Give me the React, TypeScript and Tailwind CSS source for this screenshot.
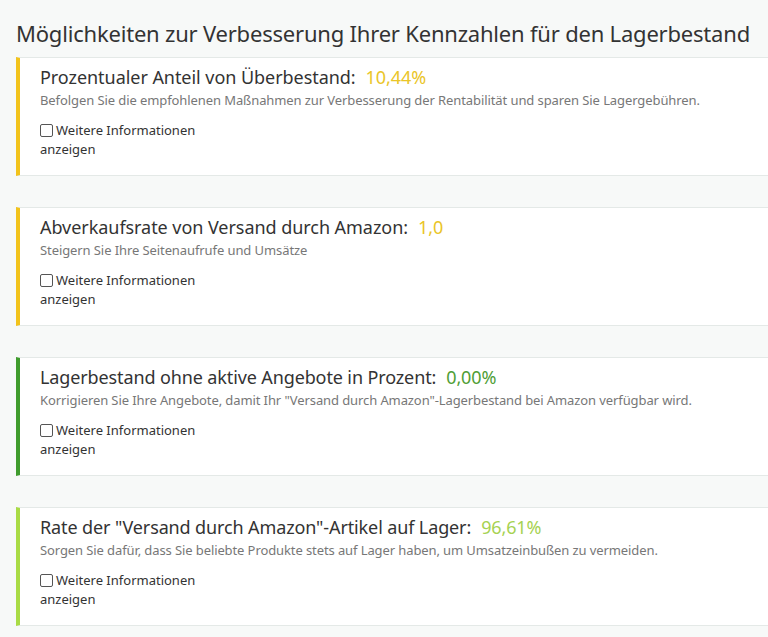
import { useState } from 'react'

type Metric = {
  title: string
  value: string
  hint: string
  bar: string
  tone: string
  wide?: boolean
}

const metrics: Metric[] = [
  {
    title: 'Prozentualer Anteil von Überbestand:',
    value: '10,44%',
    hint: 'Befolgen Sie die empfohlenen Maßnahmen zur Verbesserung der Rentabilität und sparen Sie Lagergebühren.',
    bar: 'border-l-[#f2c31b]',
    tone: 'text-[#eac528]',
    wide: true,
  },
  {
    title: 'Abverkaufsrate von Versand durch Amazon:',
    value: '1,0',
    hint: 'Steigern Sie Ihre Seitenaufrufe und Umsätze',
    bar: 'border-l-[#f2c31b]',
    tone: 'text-[#eac528]',
    wide: true,
  },
  {
    title: 'Lagerbestand ohne aktive Angebote in Prozent:',
    value: '0,00%',
    hint: 'Korrigieren Sie Ihre Angebote, damit Ihr "Versand durch Amazon"-Lagerbestand bei Amazon verfügbar wird.',
    bar: 'border-l-[#3f9c2d]',
    tone: 'text-[#4f9e36]',
  },
  {
    title: 'Rate der "Versand durch Amazon"-Artikel auf Lager:',
    value: '96,61%',
    hint: 'Sorgen Sie dafür, dass Sie beliebte Produkte stets auf Lager haben, um Umsatzeinbußen zu vermeiden.',
    bar: 'border-l-[#a9db45]',
    tone: 'text-[#a6d252]',
  },
]

function MetricCard({ m }: { m: Metric }) {
  const [open, setOpen] = useState(false)
  return (
    <section
      className={`border-l-4 ${m.bar} border-y border-y-[#e4e9e7] bg-white pl-5 pt-[7px] pb-4 text-[#333]`}
    >
      <h3 className={`text-[18px] leading-6 ${m.wide ? 'tracking-[-0.05px]' : 'tracking-[-0.12px]'}`}>
        {m.title}
        <span className={`ml-2.5 ${m.tone}`}>{m.value}</span>
      </h3>
      <p
        className={`mt-0.5 text-[13px] leading-[18px] text-[#777] ${
          m.wide ? 'tracking-[-0.09px]' : 'tracking-[-0.1px]'
        }`}
      >
        {m.hint}
      </p>
      <label className="mt-3 flex w-[160px] cursor-pointer flex-wrap items-center text-[13px] leading-[19px]">
        <input
          type="checkbox"
          checked={open}
          onChange={() => setOpen(!open)}
          className="mr-[3px] h-[13px] w-[13px] appearance-none rounded-[2px] border border-[#555] bg-white"
        />
        Weitere Informationen
        <span className="w-full">anzeigen</span>
      </label>
    </section>
  )
}

export default function App() {
  return (
    <div className="min-h-[637px] bg-[#f7f9f8] pl-4 pt-[19px] font-['Noto_Sans',sans-serif]">
      <h2 className="text-[22px] leading-7 tracking-[-0.2px] text-[#333]">
        Möglichkeiten zur Verbesserung Ihrer Kennzahlen für den Lagerbestand
      </h2>
      <div className="mt-[10px] flex flex-col gap-[31px]">
        {metrics.map((m) => (
          <MetricCard key={m.title} m={m} />
        ))}
      </div>
    </div>
  )
}
